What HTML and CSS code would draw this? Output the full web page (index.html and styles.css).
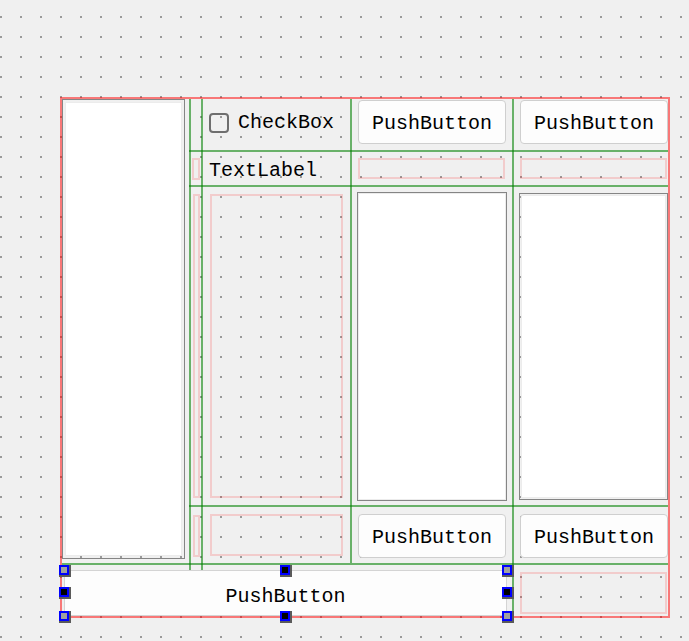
FILE: index.html
```html
<!DOCTYPE html>
<html lang="en">
<head>
  <meta charset="UTF-8" />
  <title>Form - Designer</title>
  <link rel="stylesheet" href="styles.css">
</head>
<body>
  <div class="form">
    <!-- layout guide lines -->
    <div class="vline v1"></div>
    <div class="vline v2"></div>
    <div class="vline v3"></div>
    <div class="vline v4"></div>
    <div class="hline h1"></div>
    <div class="hline h2"></div>
    <div class="hline h3"></div>
    <div class="hline h4"></div>

    <div class="list list-left"><div class="list-body"></div></div>

    <!-- row 0 -->
    <label class="checkbox r0 c5"><span class="box"></span>CheckBox</label>
    <button class="push r0 c7">PushButton</button>
    <button class="push r0 c9">PushButton</button>

    <!-- row 1 -->
    <div class="spacer thin r1 c3"></div>
    <div class="label r1 c5">TextLabel</div>
    <div class="spacer line r1 c7"></div>
    <div class="spacer line r1 c9 edge"></div>

    <!-- row 2 -->
    <div class="spacer thin tall r2 c3"></div>
    <div class="spacer block r2 c5"></div>
    <div class="list list-mid r2 c7"><div class="list-body"></div></div>
    <div class="list list-right r2 c9"><div class="list-body"></div></div>

    <!-- row 3 -->
    <div class="spacer thin low r3 c3"></div>
    <div class="spacer block r3 c5"></div>
    <button class="push bottom r3 c7">PushButton</button>
    <button class="push bottom r3 c9">PushButton</button>

    <!-- row 4 -->
    <button class="push wide">PushButton
      <span class="handle tl off"></span>
      <span class="handle tm"></span>
      <span class="handle tr off"></span>
      <span class="handle ml"></span>
      <span class="handle mr"></span>
      <span class="handle bl off"></span>
      <span class="handle bm"></span>
      <span class="handle br off"></span>
    </button>
    <div class="spacer corner"></div>
  </div>
</body>
</html>
```

FILE: styles.css
```css
html, body {
  margin: 0;
  padding: 0;
  height: 100%;
  overflow: hidden;
}
body {
  background-color: #f0f0f0;
  background-image: conic-gradient(from 270deg at 2px 2px, #9a9a9a 25%, transparent 0);
  background-size: 20px 20px;
  background-position: 0 16px;
  padding: 97px 0 0 60px;
  box-sizing: border-box;
  font-family: 'Liberation Mono', 'DejaVu Sans Mono', monospace;
  font-size: 20px;
  color: #000;
}
.form {
  width: 606px;
  height: 517px;
  border: 2px solid rgba(255, 0, 0, 0.5);
  display: grid;
  grid-template-columns: 127px 2px 10px 2px 147px 2px 160px 2px 154px;
  grid-template-rows: 51px 2px 33px 2px 318px 2px 56px 2px 6px 45px;
}
.vline, .hline { background: rgba(0, 128, 0, 0.56); }
.v1 { grid-column: 2; grid-row: 1 / 10; }
.v2 { grid-column: 4; grid-row: 1 / 10; }
.v3 { grid-column: 6; grid-row: 1 / 8; }
.v4 { grid-column: 8; grid-row: 1 / 11; }
.h1 { grid-row: 2; grid-column: 2 / 10; }
.h2 { grid-row: 4; grid-column: 2 / 10; }
.h3 { grid-row: 6; grid-column: 2 / 10; }
.h4 { grid-row: 8; grid-column: 1 / 10; }

.r0 { grid-row: 1; }
.r1 { grid-row: 3; }
.r2 { grid-row: 5; }
.r3 { grid-row: 7; }
.c3 { grid-column: 3; }
.c5 { grid-column: 5; }
.c7 { grid-column: 7; }
.c9 { grid-column: 9; }

.list {
  border: 1px solid #858585;
  padding: 3px;
  display: flex;
}
.list-body {
  flex: 1;
  background: #fff;
  box-shadow: 0 0 0 1px #ececec;
}
.list-left {
  grid-column: 1;
  grid-row: 1 / 8;
  margin: 0 4px 4px 0;
}
.list-mid { margin: 5px 5px 4px 5px; padding: 1px; }
.list-right { margin: 6px 0 5px 5px; padding: 2px; }

.checkbox {
  display: flex;
  align-items: center;
  padding-left: 6px;
  margin-bottom: 4px;
}
.checkbox .box {
  width: 16px;
  height: 16px;
  border: 2px solid #6e6e6e;
  border-radius: 4px;
  margin-right: 9px;
}
.label {
  display: flex;
  align-items: center;
  padding-left: 6px;
  margin-top: 4px;
}

.push {
  font-family: inherit;
  font-size: 20px;
  color: #000;
  background: #fdfdfd;
  border: 1px solid #cfcfcf;
  border-radius: 4px;
  padding: 2px 0 0;
  margin: 1px 6px 6px 6px;
}
.push.c9 { margin-right: 0; }
.push.bottom { margin: 7px 6px 5px 6px; }
.push.bottom.c9 { margin-right: 0; }

.spacer { border: 2px solid rgba(255, 0, 0, 0.15); }
.spacer.thin { margin: 6px 1px 5px 1px; }
.spacer.thin.tall { margin: 7px 1px 7px 2px; }
.spacer.thin.low { margin: 8px 1px 6px 2px; }
.spacer.line { margin: 6px 7px 6px 6px; }
.spacer.line.edge { margin-right: 1px; }
.spacer.block { margin: 7px 7px 7px 7px; }
.spacer.corner {
  grid-column: 9;
  grid-row: 9 / 11;
  margin: 7px 1px 2px 6px;
}

.push.wide {
  grid-column: 1 / 8;
  grid-row: 9 / 11;
  margin: 5px 5px 0 2px;
  border-radius: 0;
  border-color: #d4d4d4;
  position: relative;
  padding-top: 7px;
}
.handle {
  position: absolute;
  width: 6px;
  height: 6px;
  border: 2px solid #0000ff;
  background: #000;
  box-shadow: 1px 1px 0 1px #5a5a5a;
}
.handle.off { background: #a0a0a0; }
.handle.tl { left: -6px; top: -6px; }
.handle.tm { left: 215px; top: -6px; }
.handle.tr { right: -6px; top: -6px; }
.handle.ml { left: -6px; top: 16px; }
.handle.mr { right: -6px; top: 16px; }
.handle.bl { left: -6px; bottom: -6px; }
.handle.bm { left: 215px; bottom: -6px; }
.handle.br { right: -6px; bottom: -6px; }
```
